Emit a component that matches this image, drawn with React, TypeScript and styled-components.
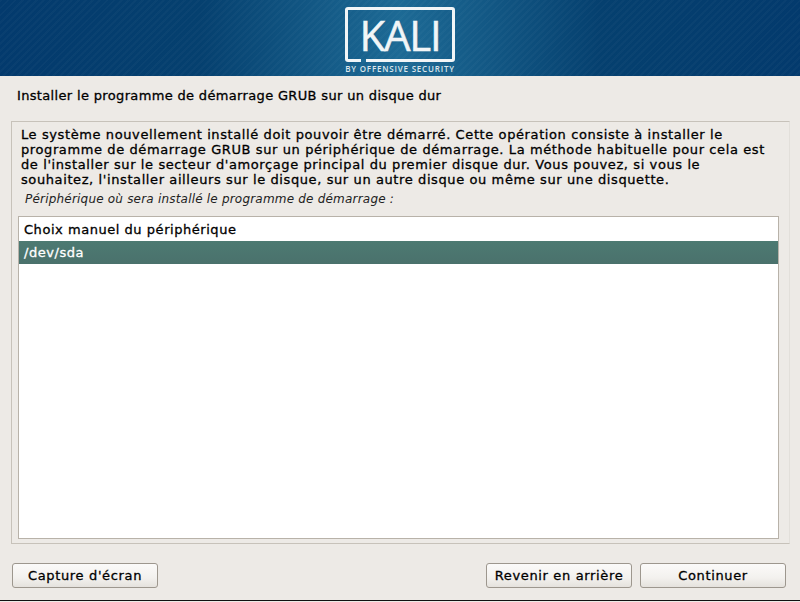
import { createGlobalStyle } from "styled-components";
import styled from "styled-components";

const GlobalStyle = createGlobalStyle`
  html, body {
    margin: 0;
    padding: 0;
    background: #edeae6;
  }
`;

const paragraph = [
  "Le système nouvellement installé doit pouvoir être démarré. Cette opération consiste à installer le",
  "programme de démarrage GRUB sur un périphérique de démarrage. La méthode habituelle pour cela est",
  "de l'installer sur le secteur d'amorçage principal du premier disque dur. Vous pouvez, si vous le",
  "souhaitez, l'installer ailleurs sur le disque, sur un autre disque ou même sur une disquette.",
];

const App = () => (
  <Page>
    <GlobalStyle />
    <Banner>
      <LogoFrame>
        <LogoText>KALI</LogoText>
        <LogoGap />
      </LogoFrame>
      <LogoTagline>BY OFFENSIVE SECURITY</LogoTagline>
    </Banner>
    <Title>Installer le programme de démarrage GRUB sur un disque dur</Title>
    <Panel>
      <Description>
        {paragraph.map((line) => (
          <Line key={line}>{line}</Line>
        ))}
      </Description>
      <Prompt>Périphérique où sera installé le programme de démarrage :</Prompt>
      <List>
        <Row>Choix manuel du périphérique</Row>
        <Row $selected>/dev/sda</Row>
      </List>
    </Panel>
    <Footer>
      <Button>Capture d'écran</Button>
      <FooterRight>
        <Button>Revenir en arrière</Button>
        <Button>Continuer</Button>
      </FooterRight>
    </Footer>
    <BottomLine />
  </Page>
);

export default App;

const Page = styled.div`
  width: 800px;
  height: 602px;
  display: flex;
  flex-direction: column;
  overflow: hidden;
  background: #edeae6;
  color: #000;
  font-family: "DejaVu Sans", sans-serif;
  font-size: 13px;
  -webkit-text-stroke: 0.3px currentColor;
  letter-spacing: 0.6px;
`;

const Banner = styled.div`
  height: 76px;
  flex: none;
  display: flex;
  flex-direction: column;
  align-items: center;
  box-sizing: border-box;
  padding-top: 7px;
  -webkit-text-stroke: 0;
  background:
    repeating-linear-gradient(135deg, rgba(255, 255, 255, 0.025) 0 2px, transparent 2px 5px),
    linear-gradient(90deg, #033a6d 0%, #05406f 25%, #1d6a95 50%, #05406f 75%, #033a6d 100%);
`;

const LogoFrame = styled.div`
  position: relative;
  width: 110px;
  height: 55px;
  box-sizing: border-box;
  border: 3px solid #f1f5f7;
  border-radius: 3px;
  display: flex;
  align-items: center;
  justify-content: center;
`;

const LogoGap = styled.span`
  position: absolute;
  left: 13px;
  bottom: -3px;
  width: 5px;
  height: 3px;
  background: #1d6a95;
`;

const LogoText = styled.span`
  font-family: "Open Sans", sans-serif;
  font-size: 42px;
  line-height: 1;
  letter-spacing: -1.2px;
  -webkit-text-stroke: 0.5px #f1f5f7;
  color: #f1f5f7;
`;

const LogoTagline = styled.div`
  margin-top: 2px;
  font-family: "Open Sans", sans-serif;
  font-size: 8px;
  font-weight: 600;
  line-height: 9px;
  letter-spacing: 0.8px;
  color: #dbe6ec;
`;

const Title = styled.div`
  height: 45px;
  flex: none;
  box-sizing: border-box;
  padding: 12px 0 0 17px;
  line-height: 16px;
  letter-spacing: 0.34px;
`;

const Panel = styled.div`
  width: 779px;
  height: 423px;
  flex: none;
  margin-left: 11px;
  box-sizing: border-box;
  border: 1px solid #c7c2ba;
  border-right-color: #e2dfda;
  padding: 5px 10px 4px 6px;
  display: flex;
  flex-direction: column;
`;

const Description = styled.div`
  padding-left: 3px;
`;

const Line = styled.div`
  line-height: 15px;
  white-space: nowrap;
`;

const Prompt = styled.div`
  height: 18px;
  margin: 3px 0 8px 7px;
  line-height: 18px;
  font-size: 12px;
  font-style: italic;
  letter-spacing: 0.2px;
  -webkit-text-stroke: 0;
  color: #222;
`;

const List = styled.div`
  flex: 1;
  box-sizing: border-box;
  border: 1px solid #b8b2a9;
  background: #fff;
  padding-top: 1px;
`;

const Row = styled.div<{ $selected?: boolean }>`
  height: 23px;
  box-sizing: border-box;
  padding-left: 5px;
  line-height: 23px;
  letter-spacing: 0.54px;
  color: ${({ $selected }) => ($selected ? "#fff" : "#000")};
  background: ${({ $selected }) => ($selected ? "linear-gradient(180deg, #4d7a72, #4a716c)" : "transparent")};
`;

const Footer = styled.div`
  height: 25px;
  flex: none;
  margin: 19px 14px 0 12px;
  display: flex;
  justify-content: space-between;
`;

const FooterRight = styled.div`
  display: flex;
  gap: 8px;
`;

const Button = styled.div`
  width: 146px;
  height: 25px;
  box-sizing: border-box;
  border: 1px solid #9d978e;
  border-radius: 3px;
  background: linear-gradient(180deg, #fbfaf9 0%, #f3f1ee 60%, #e5e2dd 100%);
  text-align: center;
  line-height: 23px;
  letter-spacing: 0.65px;
`;

const BottomLine = styled.div`
  height: 1px;
  flex: none;
  margin-top: 12px;
  background: #111;
`;
